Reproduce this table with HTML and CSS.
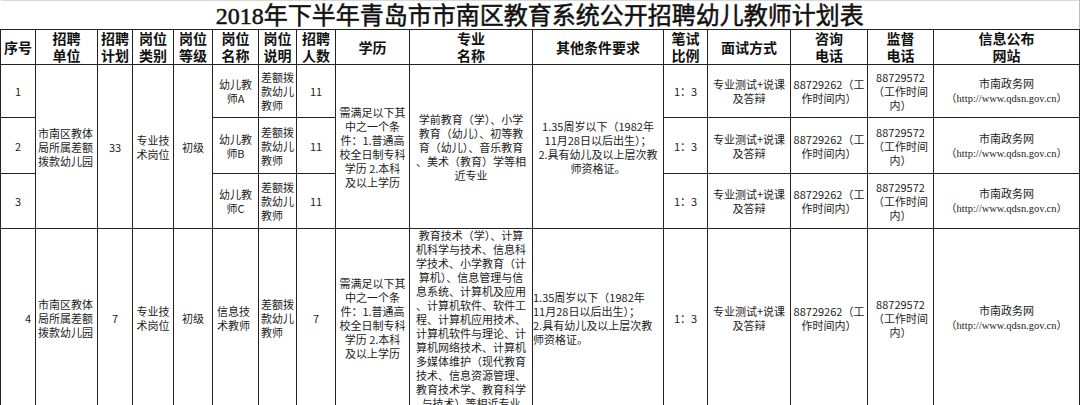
FILE: index.html
```html
<!DOCTYPE html>
<html lang="zh-CN">
<head>
<meta charset="utf-8">
<title>2018年下半年青岛市市南区教育系统公开招聘幼儿教师计划表</title>
<link rel="stylesheet" href="styles.css">
</head>
<body>
<table class="plan">
  <colgroup>
    <col style="width:35px"><col style="width:62px"><col style="width:35px"><col style="width:41px">
    <col style="width:39px"><col style="width:46px"><col style="width:38px"><col style="width:39px">
    <col style="width:74px"><col style="width:123px"><col style="width:131px"><col style="width:44px">
    <col style="width:83px"><col style="width:77px"><col style="width:66px"><col style="width:146px">
  </colgroup>
  <tr class="row-title">
    <td class="title" colspan="16">2018年下半年青岛市市南区教育系统公开招聘幼儿教师计划表</td>
  </tr>
  <tr class="row-head">
    <th>序号</th>
    <th>招聘<br>单位</th>
    <th>招聘<br>计划</th>
    <th>岗位<br>类别</th>
    <th>岗位<br>等级</th>
    <th>岗位<br>名称</th>
    <th>岗位<br>说明</th>
    <th>招聘<br>人数</th>
    <th>学历</th>
    <th>专业<br>名称</th>
    <th>其他条件要求</th>
    <th>笔试<br>比例</th>
    <th>面试方式</th>
    <th>咨询<br>电话</th>
    <th>监督<br>电话</th>
    <th>信息公布<br>网站</th>
  </tr>
  <tr class="row-1">
    <td>1</td>
    <td class="l" rowspan="3">市南区教体<br>局所属差额<br>拨款幼儿园</td>
    <td rowspan="3">33</td>
    <td rowspan="3">专业技<br>术岗位</td>
    <td rowspan="3">初级</td>
    <td>幼儿教<br>师A</td>
    <td class="l">差额拨<br>款幼儿<br>教师</td>
    <td>11</td>
    <td rowspan="3">需满足以下其<br>中之一个条<br>件：1.普通高<br>校全日制专科<br>学历 2.本科<br>及以上学历</td>
    <td rowspan="3" class="nw">学前教育（学）、小学<br>教育（幼儿）、初等教<br>育（幼儿）、音乐教育<br>、美术（教育）学等相<br>近专业</td>
    <td rowspan="3" class="nw">1.35周岁以下（1982年<br>11月28日以后出生）；<br>2.具有幼儿及以上层次教<br>师资格证。</td>
    <td>1：3</td>
    <td class="nw">专业测试+说课<br>及答辩</td>
    <td class="nw">88729262（工<br>作时间内）</td>
    <td>88729572<br>（工作时间<br>内）</td>
    <td>市南政务网<br><span class="url">（http://www.qdsn.gov.cn）</span></td>
  </tr>
  <tr class="row-2">
    <td>2</td>
    <td>幼儿教<br>师B</td>
    <td class="l">差额拨<br>款幼儿<br>教师</td>
    <td>11</td>
    <td>1：3</td>
    <td class="nw">专业测试+说课<br>及答辩</td>
    <td class="nw">88729262（工<br>作时间内）</td>
    <td>88729572<br>（工作时间<br>内）</td>
    <td>市南政务网<br><span class="url">（http://www.qdsn.gov.cn）</span></td>
  </tr>
  <tr class="row-3">
    <td>3</td>
    <td>幼儿教<br>师C</td>
    <td class="l">差额拨<br>款幼儿<br>教师</td>
    <td>11</td>
    <td>1：3</td>
    <td class="nw">专业测试+说课<br>及答辩</td>
    <td class="nw">88729262（工<br>作时间内）</td>
    <td>88729572<br>（工作时间<br>内）</td>
    <td>市南政务网<br><span class="url">（http://www.qdsn.gov.cn）</span></td>
  </tr>
  <tr class="row-4">
    <td class="r">4</td>
    <td class="l">市南区教体<br>局所属差额<br>拨款幼儿园</td>
    <td>7</td>
    <td>专业技<br>术岗位</td>
    <td>初级</td>
    <td class="l pad">信息技<br>术教师</td>
    <td class="l">差额拨<br>款幼儿<br>教师</td>
    <td>7</td>
    <td>需满足以下其<br>中之一个条<br>件：1.普通高<br>校全日制专科<br>学历 2.本科<br>及以上学历</td>
    <td class="nw clipcell"><div class="clip"><div class="clip-inner">教育技术（学）、计算<br>机科学与技术、信息科<br>学技术、小学教育（计<br>算机）、信息管理与信<br>息系统、计算机及应用<br>、计算机软件、软件工<br>程、计算机应用技术、<br>计算机软件与理论、计<br>算机网络技术、计算机<br>多媒体维护（现代教育<br>技术、信息资源管理、<br>教育技术学、教育科学<br>与技术）等相近专业</div></div></td>
    <td class="l nw">1.35周岁以下（1982年<br>11月28日以后出生）；<br>2.具有幼儿及以上层次教<br>师资格证。</td>
    <td>1：3</td>
    <td class="nw">专业测试+说课<br>及答辩</td>
    <td class="nw">88729262（工<br>作时间内）</td>
    <td>88729572<br>（工作时间<br>内）</td>
    <td>市南政务网<br><span class="url">（http://www.qdsn.gov.cn）</span></td>
  </tr>
</table>
</body>
</html>
```
FILE: styles.css
```css
html, body {
  margin: 0;
  padding: 0;
  background: #ffffff;
}

.plan {
  width: 1079px;
  table-layout: fixed;
  border-collapse: collapse;
  font-family: "Noto Sans CJK SC", "Noto Sans", sans-serif;
  font-size: 11px;
  line-height: 14px;
  color: #1c1c1c;
}

.plan td,
.plan th {
  border: 1px solid #222;
  padding: 0 2px;
  text-align: center;
  vertical-align: middle;
  overflow: hidden;
}

.row-title { height: 28px; }
.row-head { height: 34px; }
.row-1 { height: 53px; }
.row-2 { height: 56px; }
.row-3 { height: 55px; }
.row-4 { height: 178px; }

.plan td.title {
  border-top: 1px solid #d8d8d8;
  border-left: none;
  border-right: 1px solid #bdbdbd;
  border-bottom: 1px solid #222;
  font-family: "Liberation Serif", "Noto Sans CJK SC", serif;
  font-size: 24px;
  font-weight: 400;
  -webkit-text-stroke: 0.5px #111;
  line-height: 26px;
  padding: 2px 0 0;
  color: #111;
}

.plan th {
  font-size: 14px;
  font-weight: 700;
  line-height: 17px;
  color: #111;
  padding: 0;
}

.plan td.l { text-align: left; }
.plan td.r { text-align: right; padding-right: 4px; }
.plan td.pad { padding-left: 4px; }
.plan td.nw { white-space: nowrap; padding: 0; }

.plan td.clipcell { padding: 0; }

.clip {
  height: 177px;
  overflow: hidden;
}

.clip-inner {
  margin-top: -1px;
}

.url {
  font-family: "Liberation Serif", "Noto Sans CJK SC", serif;
  font-size: 10.5px;
  white-space: nowrap;
  color: #222;
}
```
